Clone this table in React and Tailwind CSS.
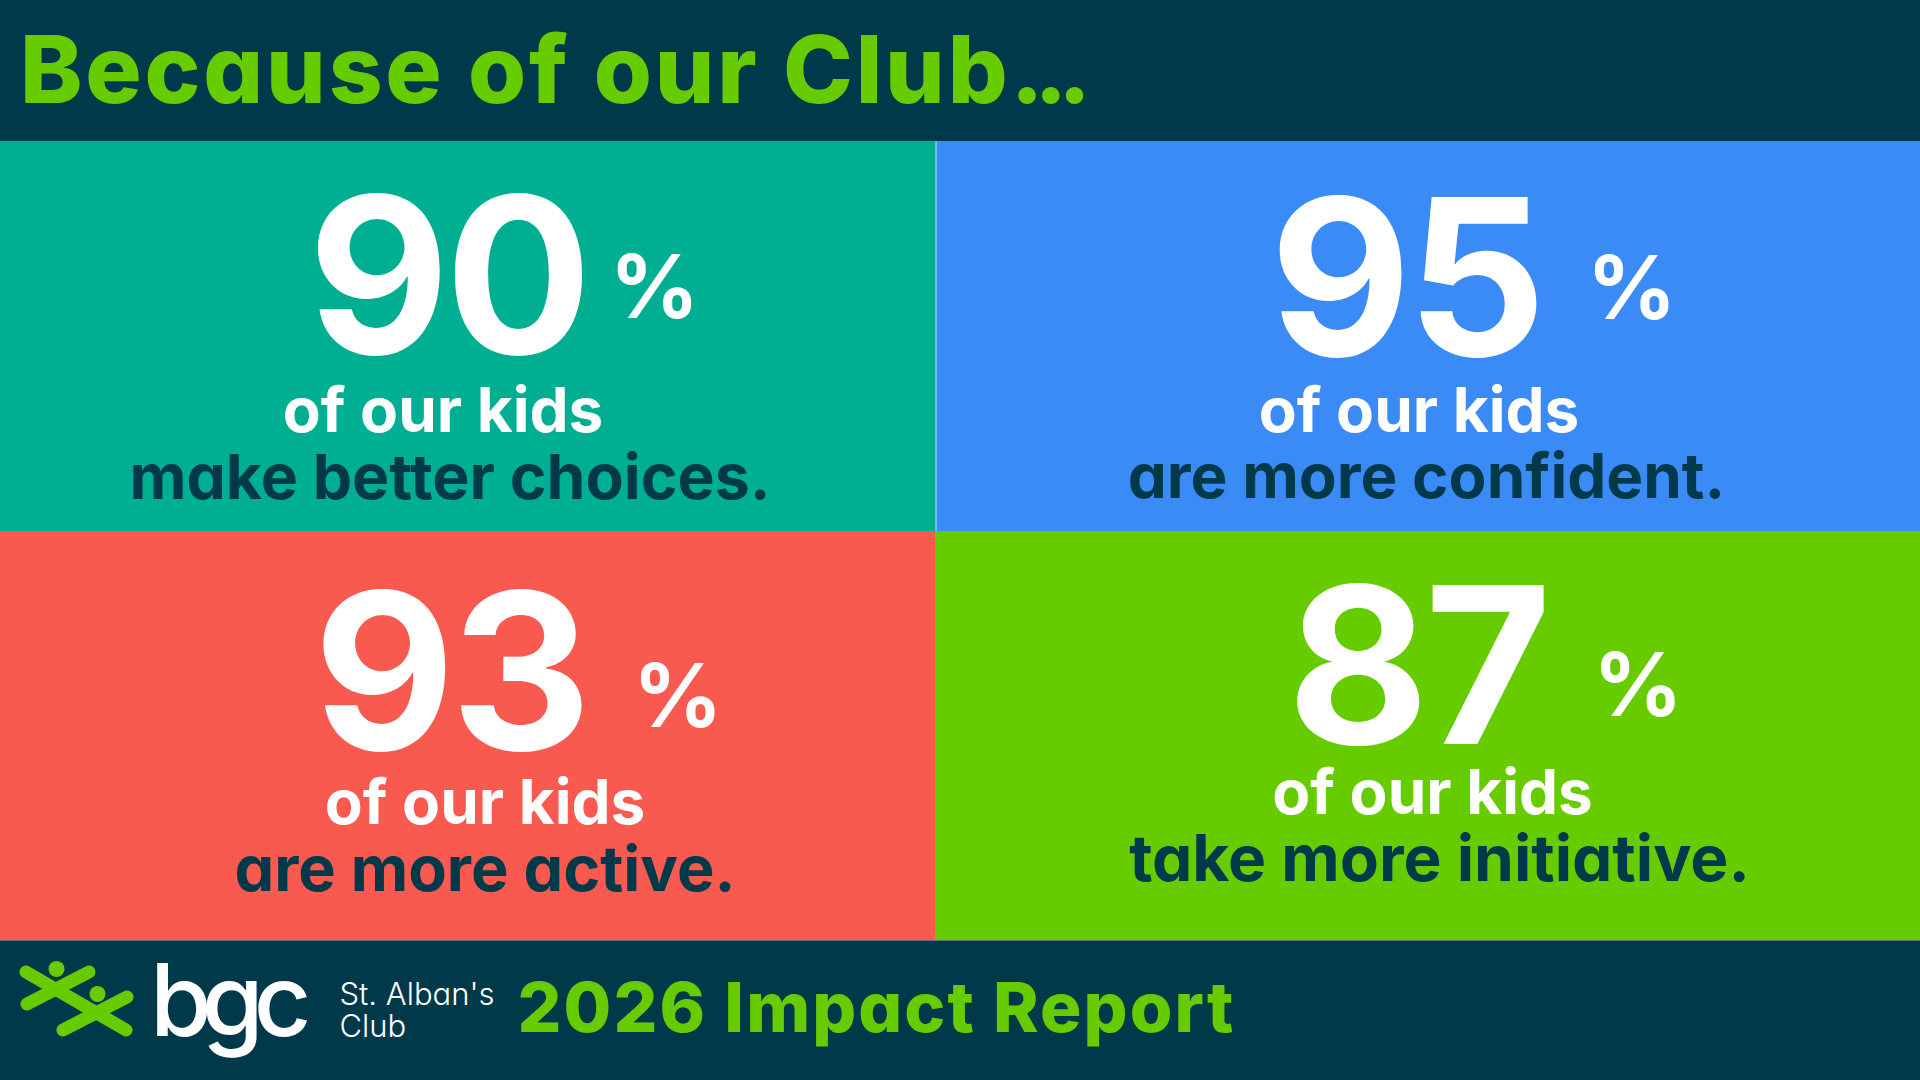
const CARDS = [
  {
    num: '90',
    line: 'make better choices.',
    bg: 'bg-[#00af91]',
    pad: 'pt-[25px]',
    row: 'ml-[72px]',
    pct: 'ml-[22px] mt-[76px]',
    l1: 'mt-[-7px] mr-[49px]',
    l2: 'text-[62.5px] mr-[35px]',
  },
  {
    num: '95',
    line: 'are more confident.',
    bg: 'bg-[#3b8bf7] border-l-2 border-[#7fb3f5]',
    pad: 'pt-[27px]',
    row: 'ml-[89px]',
    pct: 'ml-[45px] mt-[75px]',
    l1: 'mt-[-9px] mr-[19px]',
    l2: 'text-[62px] mr-[4px]',
  },
  {
    num: '93',
    line: 'are more active.',
    bg: 'bg-[#f85a50]',
    pad: 'pt-[31px]',
    row: 'ml-[101px]',
    pct: 'ml-[46px] mt-[89px]',
    l1: 'mt-[-11px] ml-[35px]',
    l2: 'text-[63px] ml-[35px]',
  },
  {
    num: '87',
    line: 'take more initiative.',
    bg: 'bg-[#66cc00]',
    pad: 'pt-[25px]',
    row: 'ml-[115px]',
    pct: 'ml-[46px] mt-[84px]',
    l1: 'mt-[-15px] ml-[10px]',
    l2: 'text-[64px] ml-[24px]',
  },
];

function StatCard({ card }) {
  return (
    <div className={`flex flex-col items-center overflow-hidden ${card.bg} ${card.pad}`}>
      <div className={`flex items-start text-white font-bold ${card.row}`}>
        <span className="text-[218px] leading-none tracking-[-0.02em]">{card.num}</span>
        <span className={`text-[88px] leading-none ${card.pct}`}>%</span>
      </div>
      <div className={`text-[62px] leading-[66px] font-bold text-white whitespace-nowrap ${card.l1}`}>
        of our kids
      </div>
      <div className={`leading-[66px] font-bold text-[#003a4a] whitespace-nowrap ${card.l2}`}>
        {card.line}
      </div>
    </div>
  );
}

function BgcMark() {
  return (
    <svg viewBox="0 0 130 90" className="w-[130px] h-[90px] ml-[10px] mt-[10px] shrink-0">
      <g stroke="#66cc00" strokeWidth="13" strokeLinecap="round" fill="none">
        <line x1="16" y1="21" x2="116" y2="79" />
        <line x1="79" y1="21" x2="17" y2="53" />
        <line x1="117" y1="46" x2="53" y2="79" />
      </g>
      <circle cx="46.5" cy="18" r="8" fill="#66cc00" />
      <circle cx="87.5" cy="43" r="8" fill="#66cc00" />
    </svg>
  );
}

export default function App() {
  return (
    <div className="w-[1920px] h-[1080px] overflow-hidden flex flex-col bg-[#003a4a] font-['Inter',sans-serif] [font-feature-settings:'cv11']">
      <header className="h-[141px] shrink-0 pl-[20px] pt-[22px]">
        <h1 className="text-[94px] leading-none font-extrabold text-[#66cc00] whitespace-nowrap tracking-[0.03em]">
          Because of our Club<span className="tracking-[-0.1em]">...</span>
        </h1>
      </header>

      <div className="grid grid-cols-[935px_985px] grid-rows-[390px_409px]">
        {CARDS.map(card => (
          <StatCard key={card.num} card={card} />
        ))}
      </div>

      <footer className="flex-1 flex items-start border-t border-[#5f7478]">
        <BgcMark />
        <span className="ml-[10px] mt-[9px] text-[100px] leading-none font-medium text-white tracking-[-0.1em]">
          bgc
        </span>
        <div className="ml-[38px] mt-[37px] text-[31px] leading-[32px] font-light text-white">
          <div>St. Alban's</div>
          <div>Club</div>
        </div>
        <span className="ml-[23px] mt-[32px] text-[69px] leading-none font-extrabold text-[#66cc00] whitespace-nowrap tracking-[0.03em]">
          2026 Impact Report
        </span>
      </footer>
    </div>
  );
}
